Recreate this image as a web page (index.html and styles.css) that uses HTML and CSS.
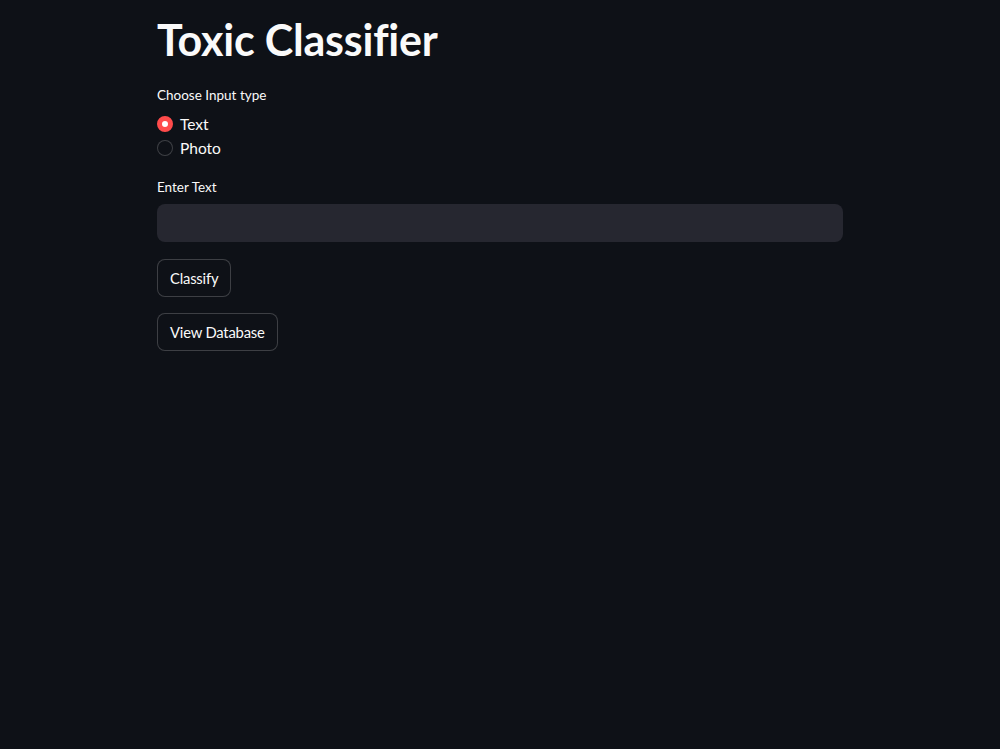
FILE: index.html
```html
<!DOCTYPE html>
<html lang="en">

<head>
    <meta charset="UTF-8">
    <meta name="viewport" content="width=device-width, initial-scale=1.0">
    <title>Toxic Classifier</title>
    <link rel="stylesheet" href="styles.css">
</head>

<body>
    <main class="mainBlock">
        <h1 class="pageTitle">Toxic Classifier</h1>

        <div class="widget">
            <div class="widgetLabel">Choose Input type</div>
            <div class="radioGroup">
                <label class="radioOption">
                    <input type="radio" name="inputType" value="text" checked>
                    <span class="radioDot"></span>
                    <span>Text</span>
                </label>
                <label class="radioOption">
                    <input type="radio" name="inputType" value="photo">
                    <span class="radioDot"></span>
                    <span>Photo</span>
                </label>
            </div>
        </div>

        <div class="widget inputWidget">
            <label class="widgetLabel" for="textInput">Enter Text</label>
            <input type="text" id="textInput" class="textInput">
        </div>

        <div class="widget">
            <button class="appButton">Classify</button>
        </div>

        <div class="widget">
            <button class="appButton">View Database</button>
        </div>
    </main>
</body>

</html>
```

FILE: styles.css
```css
:root {
    --bgColor: #0e1117;
    --secondaryBgColor: #262730;
    --textColor: #fafafa;
    --primaryColor: #ff4b4b;
    --borderColor: rgba(250, 250, 250, 0.2);
}

* {
    box-sizing: border-box;
}

html,
body {
    margin: 0;
    background-color: var(--bgColor);
    color: var(--textColor);
    font-family: "Lato", "Open Sans", sans-serif;
}

.mainBlock {
    width: 686px;
    margin: 0 auto;
    padding-top: 13px;
    display: flex;
    flex-direction: column;
}

.pageTitle {
    margin: 0 0 18px;
    font-size: 43px;
    font-weight: 700;
    line-height: 54px;
    letter-spacing: -0.2px;
}

.widget {
    margin-bottom: 16px;
}

.widgetLabel {
    display: block;
    font-size: 13.5px;
    line-height: 20px;
    margin-bottom: 9px;
}

.inputWidget {
    margin-bottom: 17px;
}

.inputWidget .widgetLabel {
    margin-bottom: 7px;
}

.radioGroup {
    display: flex;
    flex-direction: column;
    gap: 4px;
    margin-bottom: 3px;
}

.radioOption {
    display: flex;
    align-items: center;
    gap: 7px;
    font-size: 15.5px;
    line-height: 20px;
    cursor: pointer;
}

.radioOption input {
    display: none;
}

.radioDot {
    width: 16px;
    height: 16px;
    border-radius: 50%;
    border: 1px solid var(--borderColor);
    background-color: var(--bgColor);
}

.radioOption input:checked + .radioDot {
    border: 5px solid var(--primaryColor);
    background-color: #fff;
}

.textInput {
    width: 100%;
    height: 38px;
    border: none;
    border-radius: 8px;
    background-color: var(--secondaryBgColor);
    color: var(--textColor);
    padding: 0 12px;
    font-size: 15px;
    outline: none;
}

.appButton {
    height: 38px;
    padding: 0 12px;
    border: 1px solid var(--borderColor);
    border-radius: 8px;
    background-color: var(--bgColor);
    color: var(--textColor);
    font-family: inherit;
    font-size: 14.8px;
    letter-spacing: -0.2px;
    cursor: pointer;
}
```
